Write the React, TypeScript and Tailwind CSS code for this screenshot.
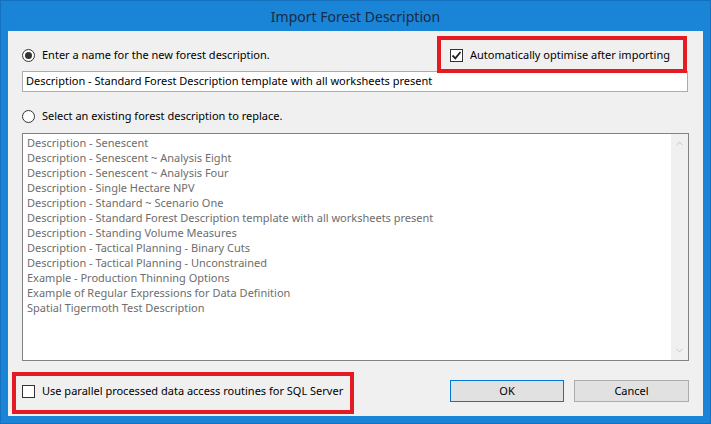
import { ChevronUp, ChevronDown } from 'lucide-react';

const items = [
  'Description - Senescent',
  'Description - Senescent ~ Analysis Eight',
  'Description - Senescent ~ Analysis Four',
  'Description - Single Hectare NPV',
  'Description - Standard ~ Scenario One',
  'Description - Standard Forest Description template with all worksheets present',
  'Description - Standing Volume Measures',
  'Description - Tactical Planning - Binary Cuts',
  'Description - Tactical Planning - Unconstrained',
  'Example - Production Thinning Options',
  'Example of Regular Expressions for Data Definition',
  'Spatial Tigermoth Test Description',
];

const Radio = ({ checked }: { checked?: boolean }) => (
  <span className="w-[13px] h-[13px] rounded-full border border-[#333] bg-white flex items-center justify-center shrink-0">
    {checked && <span className="w-[7px] h-[7px] rounded-full bg-[#333]" />}
  </span>
);

const Box = ({ checked }: { checked?: boolean }) => (
  <span className="w-[13px] h-[13px] border border-[#333] bg-white flex items-center justify-center shrink-0">
    {checked && (
      <svg viewBox="0 0 11 11" className="w-[11px] h-[11px]">
        <path d="M1.5 5.5 L4.3 8.3 L9.5 2" fill="none" stroke="#222" strokeWidth="1.8" />
      </svg>
    )}
  </span>
);

export default function App() {
  return (
    <div
      className="w-[711px] h-[424px] bg-[#1a84d7] border border-[#1570c0] flex flex-col text-[11px] text-black"
      style={{ fontFamily: '"Noto Sans", "Open Sans", sans-serif' }}
    >
      {/* Title bar */}
      <div className="h-[30px] flex items-center justify-center text-[14px] text-[#1b2a44] shrink-0">
        Import Forest Description
      </div>

      {/* Client area */}
      <div className="relative flex-1 mx-[7px] mb-[7px] bg-[#f0f0f0] flex flex-col px-[14px] pt-[15px]">
        <div className="flex items-center h-[18px]">
          <Radio checked />
          <span className="ml-[7px]">Enter a name for the new forest description.</span>
          <div className="ml-auto mr-[19px] flex items-center">
            <Box checked />
            <span className="ml-[7px]">Automatically optimise after importing</span>
          </div>
        </div>

        <div className="mt-[7px] h-[21px] mr-[1px] bg-white border border-[#acacac] flex items-center px-[3px]">
          Description - Standard Forest Description template with all worksheets present
        </div>

        <div className="mt-[15px] flex items-center h-[18px]">
          <Radio />
          <span className="ml-[7px]">Select an existing forest description to replace.</span>
        </div>

        <div className="mt-[8px] h-[228px] bg-white border border-[#828282] flex">
          <div className="flex-1 pl-[4px] pt-[1px] text-[#6d6d6d] leading-[15px]">
            {items.map((t) => (
              <div key={t} className="h-[15px] whitespace-nowrap">{t}</div>
            ))}
          </div>
          <div className="w-[17px] bg-[#f0f0f0] flex flex-col items-center justify-between py-[4px] text-[#c2c2c2]">
            <ChevronUp className="w-[11px] h-[11px]" strokeWidth={2} />
            <ChevronDown className="w-[11px] h-[11px]" strokeWidth={2} />
          </div>
        </div>

        <div className="mt-[19px] flex items-center h-[22px]">
          <Box />
          <span className="ml-[7px]">Use parallel processed data access routines for SQL Server</span>
          <div className="ml-auto flex gap-[10px]">
            <button className="w-[114px] h-[22px] bg-[#e1e1e1] border border-[#0078d7] text-black">OK</button>
            <button className="w-[115px] h-[22px] bg-[#e1e1e1] border border-[#adadad] text-black">Cancel</button>
          </div>
        </div>

        {/* Annotation boxes */}
        <div className="absolute left-[429px] top-[5px] w-[250px] h-[37px] border-[4px] border-[#e51b24]" />
        <div className="absolute left-[4px] top-[341px] w-[342px] h-[42px] border-[4px] border-[#e51b24]" />
      </div>
    </div>
  );
}
